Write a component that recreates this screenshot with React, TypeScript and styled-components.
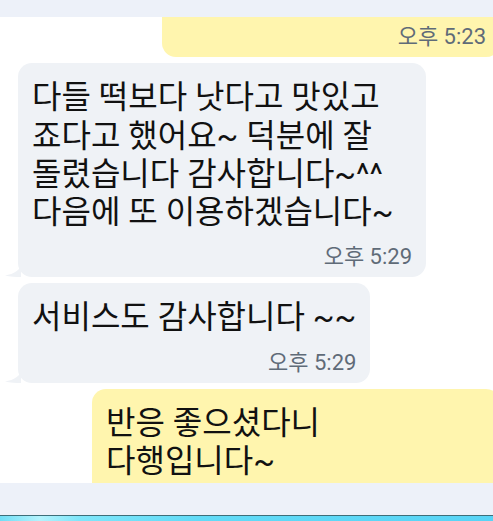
import React from "react";
import styled, { createGlobalStyle } from "styled-components";

const Global = createGlobalStyle`
  html, body { margin: 0; padding: 0; background: #ffffff; overflow: hidden; }
  body { font-family: Roboto, "Noto Sans CJK KR", sans-serif; }
`;

const Screen = styled.div`
  width: 493px;
  height: 521px;
  display: flex;
  flex-direction: column;
  overflow: hidden;
  background: #ffffff;
`;

const TopBar = styled.div`
  height: 17px;
  flex: none;
  background: #edf1f9;
`;

const Viewport = styled.div`
  flex: 1;
  min-height: 0;
  overflow: hidden;
  position: relative;
`;

const Thread = styled.div<{ $offset: number }>`
  display: flex;
  flex-direction: column;
  gap: 6px;
  margin-top: ${(p) => -p.$offset}px;
  padding-left: 18px;
`;

const Bubble = styled.div<{ $mine?: boolean }>`
  position: relative;
  box-sizing: border-box;
  max-width: 408px;
  padding: 15px 14px 7px 14px;
  border-radius: 14px;
  background: ${(p) => (p.$mine ? "#fff5ae" : "#eff2f6")};
  align-self: ${(p) => (p.$mine ? "flex-end" : "flex-start")};
  margin-right: ${(p) => (p.$mine ? "-7px" : "0")};
`;

const Text = styled.div`
  font-family: Roboto, "Noto Sans CJK KR", sans-serif;
  font-size: 32px;
  line-height: 38.3px;
  color: #111111;
  word-break: keep-all;
  white-space: pre-line;
`;

const Time = styled.div`
  margin-top: 13px;
  text-align: right;
  font-family: Roboto, "Noto Sans CJK KR", sans-serif;
  font-size: 22px;
  line-height: 26px;
  color: #5f6b78;
`;

const Tail = styled.svg`
  position: absolute;
  left: -13px;
  bottom: 0;
  width: 16px;
  height: 14px;
  fill: #eff2f6;
`;

const BottomBar = styled.div`
  height: 32px;
  flex: none;
  background: #edf1f9;
`;

const Divider = styled.div`
  height: 1px;
  flex: none;
  background: #3e6e79;
`;

const Taskbar = styled.div`
  height: 5px;
  flex: none;
  background: linear-gradient(90deg, #6fdef6 0%, #b4f3fd 8%, #7fe6fa 16%, #62dbf7 40%, #58d4f6 100%);
`;

const BubbleTail = () => (
  <Tail viewBox="0 0 16 14">
    <path d="M16 0 C16 7 9 11 0 12.5 C5 14 11 14 16 14 Z" />
  </Tail>
);

export default function App() {
  return (
    <>
      <Global />
      <Screen>
        <TopBar />
        <Viewport>
          <Thread $offset={59}>
            <Bubble $mine>
              <Text>맛있게 드셨다니 기뻐요</Text>
              <Time>오후 5:23</Time>
            </Bubble>
            <Bubble>
              <Text>
                다들 떡보다 낫다고 맛있고 죠다고 했어요~ 덕분에 잘 돌렸습니다 감사합니다~^^ 다음에 또 이용하겠습니다~
              </Text>
              <Time>오후 5:29</Time>
              <BubbleTail />
            </Bubble>
            <Bubble>
              <Text>서비스도 감사합니다 ~~</Text>
              <Time>오후 5:29</Time>
              <BubbleTail />
            </Bubble>
            <Bubble $mine>
              <Text>{"반응 좋으셨다니\n다행입니다~\n항상 정성껏 만들게요 또 찾아주세요"}</Text>
              <Time>오후 5:30</Time>
            </Bubble>
          </Thread>
        </Viewport>
        <BottomBar />
        <Divider />
        <Taskbar />
      </Screen>
    </>
  );
}
